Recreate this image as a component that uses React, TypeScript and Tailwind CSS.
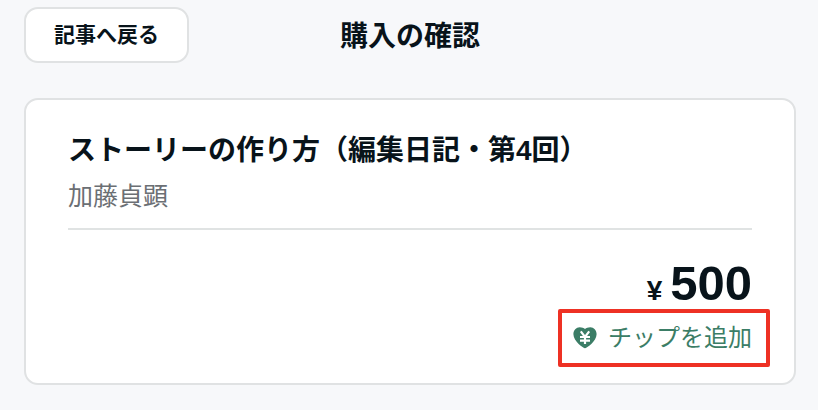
import React from "react";

function TipIcon() {
  return (
    <svg width="24" height="24" viewBox="0 0 24 24" aria-hidden="true">
      <path
        d="M12 22.2C10.6 22.2 0.4 15.2 0.4 8.2C0.4 4.2 3.2 1.3 6.7 1.3C8.9 1.3 10.8 2.1 12 3.1C13.2 2.1 15.1 1.3 17.3 1.3C20.8 1.3 23.6 4.2 23.6 8.2C23.6 15.2 13.4 22.2 12 22.2Z"
        fill="#3b7d66"
      />
      <path
        d="M7.8 5.4L12 11L16.2 5.4M12 11V18M7 11H17M7 14.6H17"
        fill="none"
        stroke="#ffffff"
        strokeWidth="2.2"
      />
    </svg>
  );
}

function Header() {
  return (
    <header className="grid grid-cols-[1fr_auto_1fr] items-center">
      <a
        href="#article"
        className="justify-self-start rounded-[14px] border-2 border-[#e0e2e3] bg-white px-7 py-3 text-[21px] leading-7 font-bold"
      >
        記事へ戻る
      </a>
      <h1 className="pt-1 text-[28px] leading-10 font-bold">購入の確認</h1>
    </header>
  );
}

function PurchaseCard() {
  return (
    <section className="mt-[35px] rounded-[14px] border-2 border-[#e0e2e3] bg-white px-[42px] pt-[31px] pb-[27px]">
      <div className="border-b-2 border-[#e0e3e3] pb-[14px]">
        <h2 className="text-[28px] leading-10 font-bold">ストーリーの作り方（編集日記・第4回）</h2>
        <p className="mt-[7px] text-[25px] leading-9 text-[#6b6f74]">加藤貞顕</p>
      </div>
      <div className="mt-[25px] flex flex-col items-end">
        <p className="flex items-baseline gap-2 leading-[56px] font-bold">
          <span className="text-[28px]">¥</span>
          <span className="text-[49px]">500</span>
        </p>
        <div className="relative mt-px">
          <button type="button" className="flex items-center gap-[11px] text-[24px] leading-9 text-[#3b7d66]">
            <TipIcon />
            チップを追加
          </button>
          <span className="pointer-events-none absolute -inset-y-[11px] -right-[18px] -left-[15px] rounded-[2px] border-4 border-[#ee3124]" />
        </div>
      </div>
    </section>
  );
}

export default function App() {
  return (
    <main className="min-h-screen bg-[#f7f8fa] pt-[7px] pr-[22px] pb-6 pl-6 font-['Liberation_Sans','Noto_Sans_CJK_JP',sans-serif] text-[#08131a]">
      <Header />
      <PurchaseCard />
    </main>
  );
}
